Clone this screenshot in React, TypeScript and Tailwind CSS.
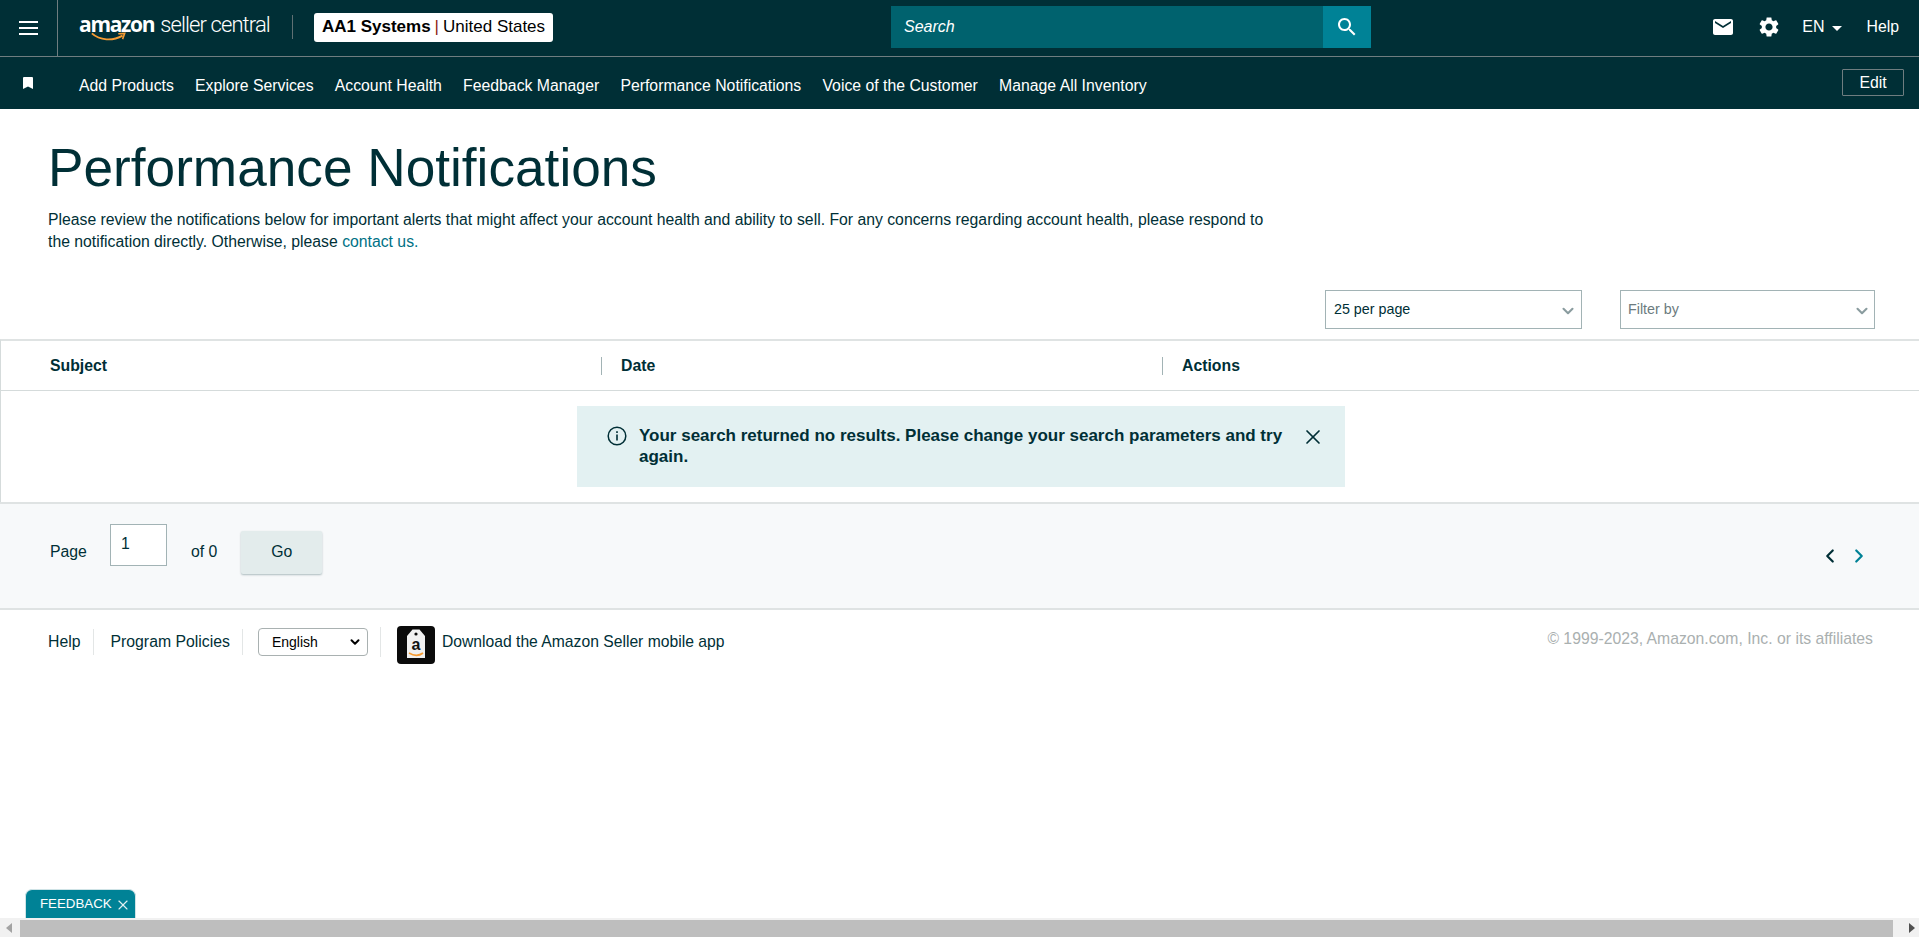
import React from 'react';
import { ChevronDown, ChevronLeft, ChevronRight, X } from 'lucide-react';

const navLinks = [
    'Add Products',
    'Explore Services',
    'Account Health',
    'Feedback Manager',
    'Performance Notifications',
    'Voice of the Customer',
    'Manage All Inventory',
];

const Smile = ({ className }: { className?: string }) => (
    <svg viewBox="0 0 50 14" className={className}>
        <path d="M1 2 C12 12 30 13 44 5" fill="none" stroke="#f79c34" strokeWidth="2.6" />
        <path d="M38 2.5 L47 2 L44 10" fill="none" stroke="#f79c34" strokeWidth="2.2" />
    </svg>
);

const MailIcon = () => (
    <svg viewBox="0 0 24 24" className="w-[24px] h-[24px]" fill="white">
        <path d="M20 4H4c-1.1 0-1.99.9-1.99 2L2 18c0 1.1.9 2 2 2h16c1.1 0 2-.9 2-2V6c0-1.1-.9-2-2-2zm0 4l-8 5-8-5V6l8 5 8-5v2z" />
    </svg>
);

const GearIcon = () => (
    <svg viewBox="0 0 24 24" className="w-[24px] h-[24px]" fill="white">
        <path d="M19.14 12.94c.04-.3.06-.61.06-.94 0-.32-.02-.64-.07-.94l2.03-1.58c.18-.14.23-.41.12-.61l-1.92-3.32c-.12-.22-.37-.29-.59-.22l-2.39.96c-.5-.38-1.03-.7-1.62-.94l-.36-2.54c-.04-.24-.24-.41-.48-.41h-3.84c-.24 0-.43.17-.47.41l-.36 2.54c-.59.24-1.13.57-1.62.94l-2.39-.96c-.22-.08-.47 0-.59.22L2.74 8.87c-.12.21-.08.47.12.61l2.03 1.58c-.05.3-.09.63-.09.94s.02.64.07.94l-2.03 1.58c-.18.14-.23.41-.12.61l1.92 3.32c.12.22.37.29.59.22l2.39-.96c.5.38 1.03.7 1.62.94l.36 2.54c.05.24.24.41.48.41h3.84c.24 0 .44-.17.47-.41l.36-2.54c.59-.24 1.13-.56 1.62-.94l2.39.96c.22.08.47 0 .59-.22l1.92-3.32c.12-.22.07-.47-.12-.61l-2.01-1.58zM12 15.6c-1.98 0-3.6-1.62-3.6-3.6s1.62-3.6 3.6-3.6 3.6 1.62 3.6 3.6-1.62 3.6-3.6 3.6z" />
    </svg>
);

const SearchIcon = () => (
    <svg viewBox="0 0 24 24" className="w-[24px] h-[24px]" fill="white">
        <path d="M15.5 14h-.79l-.28-.27C15.41 12.59 16 11.11 16 9.5 16 5.91 13.09 3 9.5 3S3 5.91 3 9.5 5.91 16 9.5 16c1.61 0 3.09-.59 4.23-1.57l.27.28v.79l5 4.99L20.49 19l-4.99-5zm-6 0C7.01 14 5 11.99 5 9.5S7.01 5 9.5 5 14 7.01 14 9.5 11.99 14 9.5 14z" />
    </svg>
);

const AppIcon = () => (
    <svg viewBox="0 0 38 38" className="w-[38px] h-[38px] shrink-0">
        <rect width="38" height="38" rx="4" fill="#0b0b0b" />
        <path d="M15.5 3.5 H22.5 L28 10 V32 H10 V10 Z" fill="#f1f1f1" />
        <circle cx="19" cy="8" r="1.6" fill="#0b0b0b" />
        <path d="M12 27 C17 30 22 30 26 27" fill="none" stroke="#f79c34" strokeWidth="1.6" />
        <text x="19" y="24" textAnchor="middle" fontSize="16" fontWeight="700" fontFamily="Liberation Sans, sans-serif" fill="#111">a</text>
    </svg>
);

const App: React.FC = () => {
    return (
        <div className="relative h-[937px] w-full overflow-hidden flex flex-col bg-white text-[#002f36] font-['Liberation_Sans',Arial,sans-serif]">
            {/* Top bar */}
            <header className="h-[57px] shrink-0 bg-[#002f36] border-b border-[#6f7d80] flex items-center text-white">
                <button className="w-[58px] h-full border-r border-[#6f7d80] flex items-center justify-center">
                    <span className="flex flex-col gap-[4px]">
                        <span className="block w-[19px] h-[2px] bg-white" />
                        <span className="block w-[19px] h-[2px] bg-white" />
                        <span className="block w-[19px] h-[2px] bg-white" />
                    </span>
                </button>
                <div className="ml-[21px] w-[192px] h-full relative">
                    <div className="absolute left-0 top-[11px] whitespace-nowrap text-[21px] leading-[26px]">
                        <span className="font-bold font-['Open_Sans',sans-serif] tracking-[-1.3px]">amazon</span>
                        <span className="ml-[6px] font-light font-['Roboto',sans-serif] tracking-[-0.9px] text-[22px]">seller central</span>
                    </div>
                    <Smile className="absolute left-[10px] top-[32px] w-[40px] h-[10px]" />
                </div>
                <div className="ml-[21px] -mt-[2px] w-px h-[24px] bg-[#5f7073]" />
                <div className="ml-[21px] -mt-[2px] w-[239px] h-[29px] bg-white rounded-[3px] text-black flex items-center justify-center text-[17px] whitespace-nowrap">
                    <span className="font-bold">AA1 Systems</span>
                    <span className="mx-[4px] text-[#8c1d18]">|</span>
                    <span>United States</span>
                </div>
                <div className="ml-[338px] -mt-[2px] w-[480px] h-[42px] flex">
                    <div className="flex-1 bg-[#00626e] flex items-center pl-[13px] italic text-[16px]">Search</div>
                    <button className="w-[48px] bg-[#008296] flex items-center justify-center">
                        <SearchIcon />
                    </button>
                </div>
                <div className="ml-auto -mt-[2px] flex items-center">
                    <MailIcon />
                    <span className="ml-[22px]"><GearIcon /></span>
                    <span className="ml-[21px] text-[16px]">EN</span>
                    <span className="ml-[7px] mt-[2px] w-0 h-0 border-x-[5px] border-x-transparent border-t-[5px] border-t-white" />
                    <span className="ml-[25px] mr-[20px] text-[15.8px]">Help</span>
                </div>
            </header>

            {/* Shortcut bar */}
            <nav className="h-[52px] shrink-0 bg-[#002f36] flex items-center text-white text-[15.8px]">
                <div className="w-[79px] pl-[23px]">
                    <svg viewBox="0 0 10 12" className="w-[10px] h-[12px]">
                        <path d="M0 1 A1 1 0 0 1 1 0 H9 A1 1 0 0 1 10 1 V12 L5 9.5 L0 12 Z" fill="white" />
                    </svg>
                </div>
                <div className="flex gap-[21.2px] whitespace-nowrap mt-[5px]">
                    {navLinks.map((link) => (
                        <a key={link}>{link}</a>
                    ))}
                </div>
                <button className="ml-auto mr-[15px] -mt-[1px] w-[62px] h-[27px] border border-[#6f7d80] rounded-[1px] text-[15.8px]">Edit</button>
            </nav>

            <main className="flex-1 min-h-0">
                {/* Title */}
                <section className="pl-[48px] pt-[27px]">
                    <h1 className="text-[53.2px] leading-[64px] text-[#002f36]">Performance Notifications</h1>
                    <p className="mt-[9px] w-[1240px] text-[15.78px] leading-[22px]">
                        Please review the notifications below for important alerts that might affect your account health and ability to sell. For any concerns regarding account health, please respond to the notification directly. Otherwise, please <a className="text-[#007185]">contact us.</a>
                    </p>
                </section>

                {/* Filters */}
                <div className="mt-[37px] h-[39px] flex justify-end gap-[38px] pr-[44px] text-[14.3px]">
                    <div className="w-[257px] border border-[#a2b3b5] flex items-center justify-between pl-[8px] pr-[4px]">
                        <span>25 per page</span>
                        <ChevronDown size={18} strokeWidth={2.8} className="text-[#8a9c9f] mt-[3px]" />
                    </div>
                    <div className="w-[255px] border border-[#a2b3b5] flex items-center justify-between pl-[7px] pr-[3px] text-[#6c7b7e]">
                        <span>Filter by</span>
                        <ChevronDown size={18} strokeWidth={2.8} className="text-[#8a9c9f] mt-[3px]" />
                    </div>
                </div>

                {/* Table */}
                <div className="mt-[10px] border-t-2 border-[#dfe3e3] border-l border-l-[#d5dbdb]">
                    <div className="h-[50px] border-b border-[#d5dbdb] flex items-center font-bold text-[15.8px]">
                        <div className="w-[601px] pl-[49px] h-[18px] flex items-center border-r border-[#a2b3b5]">Subject</div>
                        <div className="w-[561px] pl-[19px] h-[18px] flex items-center border-r border-[#a2b3b5]">Date</div>
                        <div className="pl-[19px]">Actions</div>
                    </div>
                    <div className="h-[111px] pt-[15px]">
                        <div className="ml-[576px] w-[768px] h-[81px] bg-[#e3f1f2] flex items-start pt-[19px] pl-[30px] text-[17px] leading-[21px] font-bold">
                            <svg viewBox="0 0 20 20" className="w-[20px] h-[20px] shrink-0 mt-[1px]">
                                <circle cx="10" cy="10" r="8.8" fill="none" stroke="#002f36" strokeWidth="1.5" />
                                <rect x="9.2" y="8.5" width="1.6" height="6" fill="#002f36" />
                                <rect x="9.2" y="5.2" width="1.6" height="1.8" fill="#002f36" />
                            </svg>
                            <span className="ml-[12px] w-[650px]">Your search returned no results. Please change your search parameters and try again.</span>
                            <X size={24} strokeWidth={1.7} className="ml-[12px] shrink-0" />
                        </div>
                    </div>
                </div>

                {/* Pager */}
                <div className="h-[108px] border-y-2 border-[#dfe3e3] bg-[#f7f9fa] flex items-start pl-[50px] text-[15.8px]">
                    <span className="mt-[36px]">Page</span>
                    <div className="ml-[23px] mt-[20px] w-[57px] h-[42px] border border-[#a2b3b5] bg-white pl-[10px] pt-[7px]">1</div>
                    <span className="ml-[24px] mt-[36px]">of 0</span>
                    <button className="ml-[24px] mt-[27px] w-[81px] h-[43px] pb-[2px] bg-[#e3ecec] rounded-[2px] shadow-[0_1px_2px_rgba(0,47,54,0.3)]">Go</button>
                    <div className="ml-auto mr-[49px] mt-[41px] flex gap-[7px]">
                        <ChevronLeft size={22} strokeWidth={2.4} className="text-[#002f36]" />
                        <ChevronRight size={22} strokeWidth={2.4} className="text-[#008296]" />
                    </div>
                </div>

                {/* Footer */}
                <footer className="pl-[48px] pr-[46px] pt-[13px] flex items-start text-[15.8px]">
                    <div className="flex items-center h-[38px]">
                        <a>Help</a>
                        <span className="ml-[12px] w-px h-[26px] bg-[#e3e6e6]" />
                        <a className="ml-[17px]">Program Policies</a>
                        <span className="ml-[12px] w-px h-[26px] bg-[#e3e6e6]" />
                        <div className="ml-[15px] w-[110px] h-[28px] border border-[#a9b1b1] rounded-[4px] bg-white flex items-center justify-between pl-[13px] pr-[5px] text-[14px] text-black">
                            English
                            <ChevronDown size={14} strokeWidth={3.4} />
                        </div>
                        <span className="ml-[12px] w-px h-[30px] bg-[#e3e6e6]" />
                        <div className="ml-[16px] mt-[6px]"><AppIcon /></div>
                        <a className="ml-[7px] text-[15.7px]">Download the Amazon Seller mobile app</a>
                    </div>
                    <span className="ml-auto mt-[4px] text-[15.75px] text-[#aab0b0]">© 1999-2023, Amazon.com, Inc. or its affiliates</span>
                </footer>
            </main>

            {/* Horizontal scrollbar */}
            <div className="h-[19px] shrink-0 bg-[#f1f1f1] flex items-center">
                <span className="ml-[6px] w-0 h-0 border-y-[5px] border-y-transparent border-r-[6px] border-r-[#a3a3a3]" />
                <div className="ml-[8px] w-[1873px] h-[17px] mt-[1px] bg-[#bebebe]" />
                <span className="ml-[16px] w-0 h-0 border-y-[5px] border-y-transparent border-l-[6px] border-l-[#505050]" />
            </div>

            {/* Feedback tab */}
            <div className="absolute left-[25px] bottom-[19px] w-[111px] h-[29px] bg-[#008296] border border-b-0 border-[#cfe3e6] rounded-t-[7px] text-white text-[13.3px] flex items-center pl-[14px]">
                FEEDBACK
                <X size={16} strokeWidth={1.7} className="ml-[3px] mt-[1px] text-[#e3f1f2]" />
            </div>
        </div>
    );
};

export default App;
